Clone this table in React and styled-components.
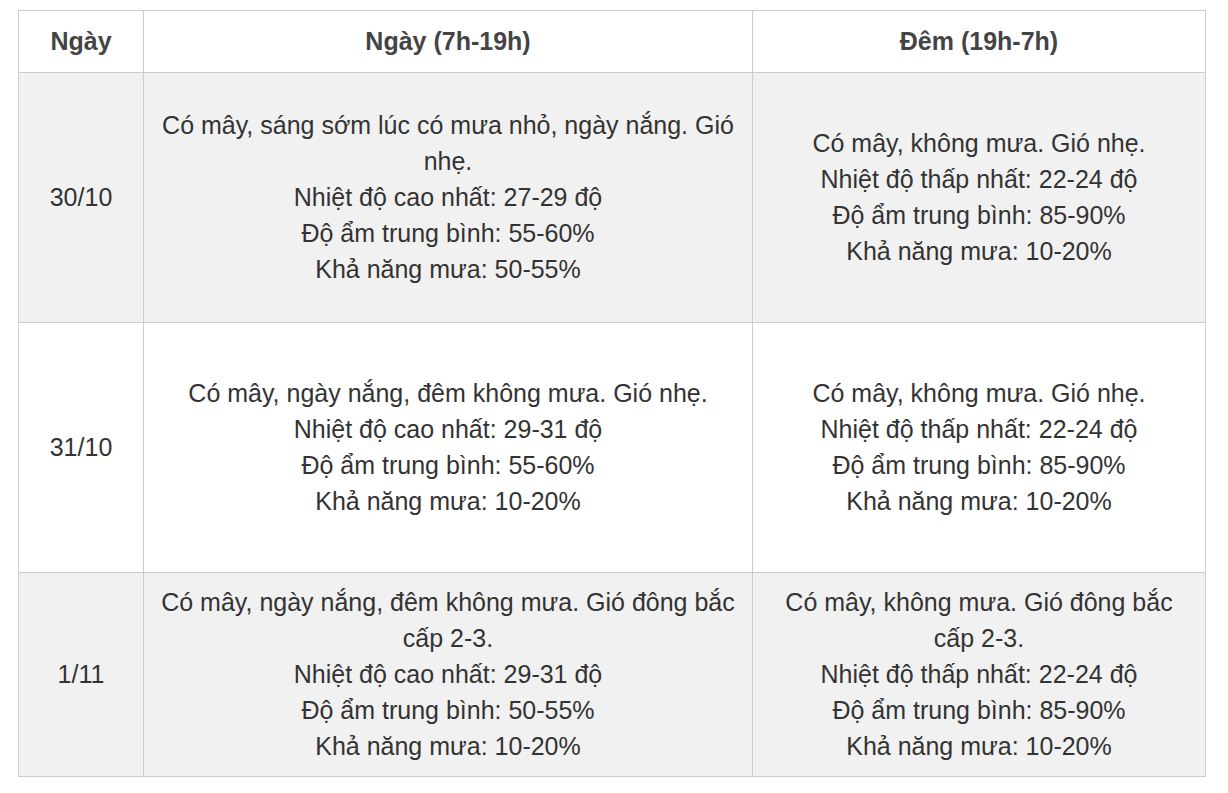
import React from 'react';
import styled, { createGlobalStyle } from 'styled-components';

const GlobalStyle = createGlobalStyle`
  html, body {
    margin: 0;
    padding: 0;
    background: #ffffff;
  }
  body {
    font-family: "Liberation Sans", Arial, sans-serif;
    color: #333333;
  }
`;

const rows = [
  {
    date: '30/10',
    tall: true,
    day: [
      'Có mây, sáng sớm lúc có mưa nhỏ, ngày nắng. Gió nhẹ.',
      'Nhiệt độ cao nhất: 27-29 độ',
      'Độ ẩm trung bình: 55-60%',
      'Khả năng mưa: 50-55%',
    ],
    night: [
      'Có mây, không mưa. Gió nhẹ.',
      'Nhiệt độ thấp nhất: 22-24 độ',
      'Độ ẩm trung bình: 85-90%',
      'Khả năng mưa: 10-20%',
    ],
  },
  {
    date: '31/10',
    tall: true,
    day: [
      'Có mây, ngày nắng, đêm không mưa. Gió nhẹ.',
      'Nhiệt độ cao nhất: 29-31 độ',
      'Độ ẩm trung bình: 55-60%',
      'Khả năng mưa: 10-20%',
    ],
    night: [
      'Có mây, không mưa. Gió nhẹ.',
      'Nhiệt độ thấp nhất: 22-24 độ',
      'Độ ẩm trung bình: 85-90%',
      'Khả năng mưa: 10-20%',
    ],
  },
  {
    date: '1/11',
    tall: false,
    day: [
      'Có mây, ngày nắng, đêm không mưa. Gió đông bắc cấp 2-3.',
      'Nhiệt độ cao nhất: 29-31 độ',
      'Độ ẩm trung bình: 50-55%',
      'Khả năng mưa: 10-20%',
    ],
    night: [
      'Có mây, không mưa. Gió đông bắc cấp 2-3.',
      'Nhiệt độ thấp nhất: 22-24 độ',
      'Độ ẩm trung bình: 85-90%',
      'Khả năng mưa: 10-20%',
    ],
  },
];

function Lines({ items }) {
  return items.map((t, i) => <Line key={i}>{t}</Line>);
}

export default function App() {
  return (
    <>
      <GlobalStyle />
      <Wrapper>
        <Table>
          <colgroup>
            <col style={{ width: 125 }} />
            <col style={{ width: 609 }} />
            <col />
          </colgroup>
          <thead>
            <tr>
              <HeadCell>Ngày</HeadCell>
              <HeadCell>Ngày (7h-19h)</HeadCell>
              <HeadCell>Đêm (19h-7h)</HeadCell>
            </tr>
          </thead>
          <tbody>
            {rows.map((r, i) => (
              <Row key={r.date} $striped={i % 2 === 0} $tall={r.tall}>
                <Cell>{r.date}</Cell>
                <Cell>
                  <Lines items={r.day} />
                </Cell>
                <Cell>
                  <Lines items={r.night} />
                </Cell>
              </Row>
            ))}
          </tbody>
        </Table>
      </Wrapper>
    </>
  );
}

const Wrapper = styled.div`
  padding: 10px 22px 0 18px;
`;

const Table = styled.table`
  width: 1188px;
  table-layout: fixed;
  border-collapse: collapse;
  font-size: 25px;
  line-height: 36px;
`;

const HeadCell = styled.th`
  height: 60px;
  padding: 0 15px 1px;
  border: 1px solid #cccccc;
  font-weight: bold;
  text-align: center;
  vertical-align: middle;
  color: #444444;
  background: #ffffff;
`;

const Row = styled.tr`
  background: ${p => (p.$striped ? '#f1f1f1' : '#ffffff')};
  height: ${p => (p.$tall ? '250px' : '204px')};
`;

const Cell = styled.td`
  padding: 9px 15px 11px;
  border: 1px solid #cccccc;
  text-align: center;
  vertical-align: middle;
`;

const Line = styled.div`
  margin: 0;
`;
